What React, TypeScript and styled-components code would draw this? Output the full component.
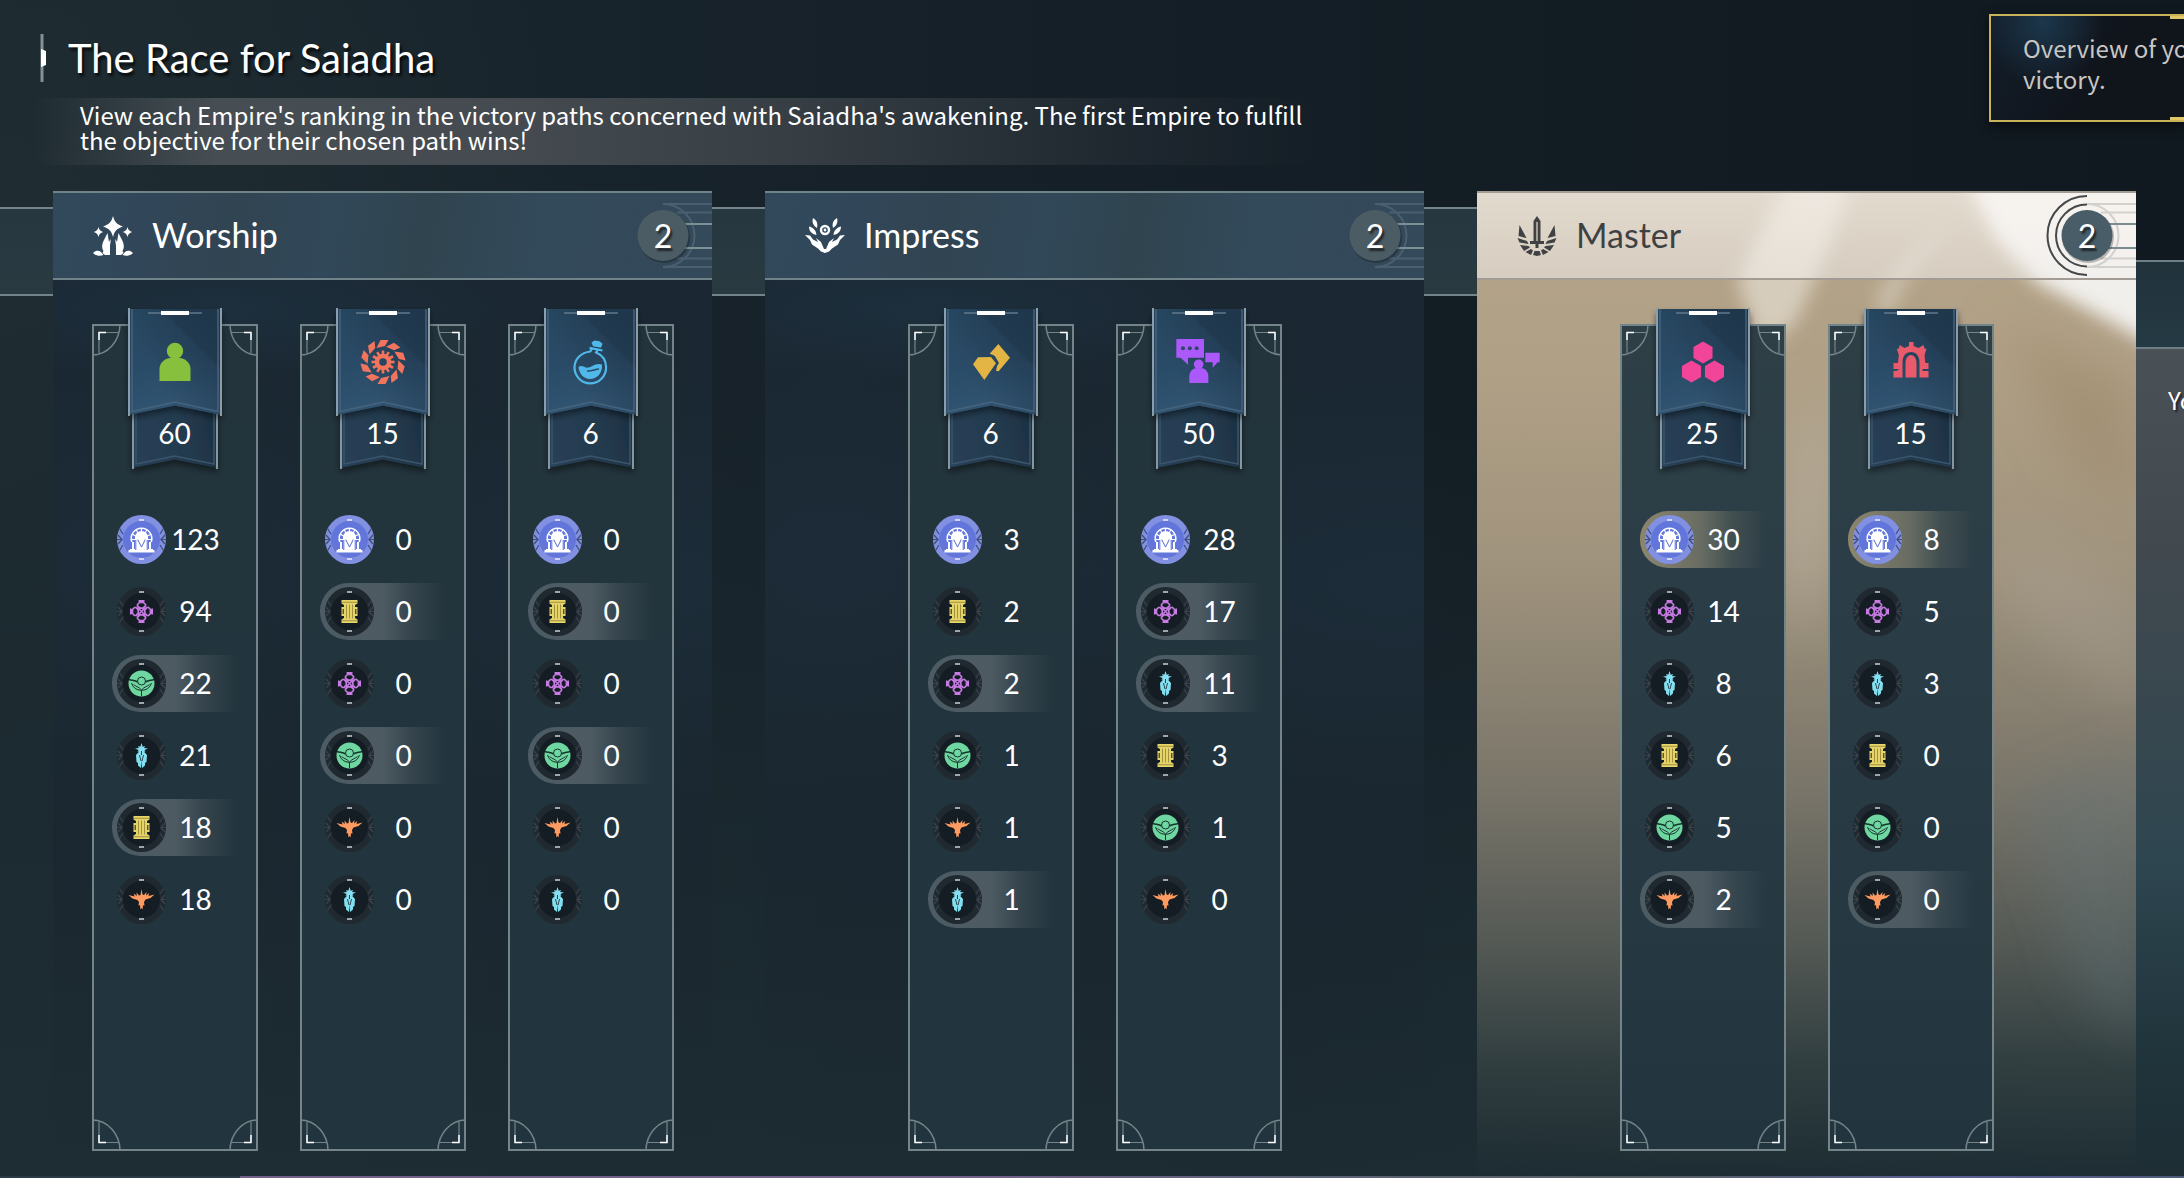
import React from "react";
import styled, { createGlobalStyle, css } from "styled-components";

const display = `Lato, "Open Sans", sans-serif`;
const body = `"Noto Sans CJK SC", "Noto Sans", sans-serif`;

const GlobalStyle = createGlobalStyle`
  *, *::before, *::after { box-sizing: border-box; }
  body { margin: 0; background: #16222a; }
  h1, h2, p, ol { margin: 0; padding: 0; }
`;

const Page = styled.main`
  position: relative;
  display: flex;
  flex-direction: column;
  min-height: 100vh;
  overflow: hidden;
  color: #fff;
  font-family: ${body};
  background:
    linear-gradient(180deg, rgba(30, 46, 52, 0) 35%, rgba(30, 46, 52, 0.85) 100%),
    radial-gradient(ellipse 900px 700px at 100% 90%, rgba(32, 56, 64, 0.7), transparent),
    radial-gradient(ellipse 600px 600px at 0% 20%, rgba(34, 47, 52, 0.6), transparent),
    linear-gradient(90deg, #1b292f 0%, #151f27 50%, #10191f 100%);
`;

const Intro = styled.header`
  display: flex;
  flex-direction: column;
  align-items: flex-start;
  gap: 16px;
  padding: 34px 40px 26px 34px;
`;

const TitleRow = styled.div`
  display: flex;
  align-items: center;
  gap: 20px;
  height: 48px;
  padding-left: 6px;
`;

const Title = styled.h1`
  font: 400 40px/48px ${display};
  text-shadow: 2px 3px 3px rgba(0, 0, 0, 0.8);
  white-space: nowrap;
`;

const Description = styled.p`
  width: 100%;
  max-width: 1290px;
  padding: 4px 8px 13px 46px;
  font-size: 24px;
  line-height: 25px;
  background: linear-gradient(
    90deg,
    rgba(84, 90, 95, 0) 0%,
    rgba(84, 90, 95, 0.75) 14%,
    rgba(84, 88, 93, 0.75) 36%,
    rgba(84, 88, 93, 0.5) 60%,
    rgba(84, 88, 93, 0.15) 85%,
    rgba(84, 88, 93, 0) 100%
  );
`;

const Notice = styled.aside`
  position: absolute;
  top: 14px;
  right: 0;
  width: 195px;
  height: 108px;
  padding: 16px 0 0 32px;
  border: 2px solid #c9b35a;
  border-right: 0;
  overflow: hidden;
  color: #c8c6c3;
  font-size: 24px;
  line-height: 31px;
  white-space: nowrap;
  background:
    radial-gradient(ellipse 60px 66px at 52px 6px, rgba(29, 58, 80, 0.9), transparent),
    linear-gradient(120deg, #131d29, #10141b 60%);
  box-shadow: 0 4px 10px rgba(0, 0, 0, 0.6);

  &::before,
  &::after {
    content: "";
    position: absolute;
    right: 0;
    width: 14px;
    height: 3px;
    background: #e0c765;
  }
  &::before { top: 0; }
  &::after { bottom: 0; }
`;

const Board = styled.div`
  flex: 1;
  display: flex;
  align-items: stretch;
`;

const Connector = styled.div`
  flex: 0 0 53px;
  display: flex;
  flex-direction: column;
  padding-top: 16px;

  &::before {
    content: "";
    height: 89px;
    border: solid #748589;
    border-width: 2px 0;
    background: linear-gradient(180deg, #263740, #293a41);
  }
`;

const SidePanel = styled.section`
  flex: 0 0 48px;
  display: flex;
  flex-direction: column;
  padding-top: 69px;
  overflow: hidden;

  &::before {
    content: "";
    height: 89px;
    border: solid #6d7f85;
    border-width: 2px 0;
    background: linear-gradient(180deg, #21323b, #253a44);
  }
`;

const SideText = styled.p`
  flex: 1;
  padding: 35px 0 0 32px;
  font-size: 24px;
  line-height: 31px;
  white-space: nowrap;
  text-shadow: 2px 2px 2px rgba(0, 0, 0, 0.6);
  background: linear-gradient(180deg, #4a5156 0%, #41494f 25%, #37474f 45%, #2e4650 62%, rgba(36, 58, 67, 0.5) 85%, transparent 100%);
`;

const Card = styled.section<{ $active?: boolean }>`
  position: relative;
  flex: 1;
  display: flex;
  flex-direction: column;
  background:
    radial-gradient(ellipse 300px 70px at 25% 12%, rgba(31, 54, 72, 0.5), transparent),
    radial-gradient(ellipse 460px 220px at 95% 40%, rgba(30, 50, 64, 0.5), transparent),
    radial-gradient(ellipse 300px 240px at 10% 38%, rgba(30, 48, 62, 0.5), transparent),
    linear-gradient(180deg, #1b2833 0%, #1a2731 40%, rgba(27, 39, 48, 0.8) 70%, rgba(28, 42, 48, 0) 100%);
  ${(p) =>
    p.$active &&
    css`
      background: linear-gradient(
        180deg,
        #b5a488 0%,
        #b0a086 18%,
        #a0937d 38%,
        #7b766a 60%,
        #555a55 76%,
        rgba(58, 70, 70, 0.75) 88%,
        rgba(33, 48, 53, 0) 100%
      );
    `}
`;

const Marble = styled.svg`
  position: absolute;
  inset: 0;
  width: 100%;
  height: 100%;
`;

const CardHeader = styled.header<{ $active?: boolean }>`
  position: relative;
  display: flex;
  align-items: center;
  gap: 19px;
  height: 89px;
  padding-left: 40px;
  border: solid ${(p) => (p.$active ? "#a39c94" : "#6f8389")};
  border-width: 2px 0;
  color: ${(p) => (p.$active ? "#3f4143" : "#fff")};
  background: ${(p) =>
    p.$active
      ? "linear-gradient(180deg, rgba(250,246,242,.66), rgba(243,240,238,.55))"
      : "linear-gradient(100deg, #32495b 0%, #31475a 10%, #314452 28%, #314859 42%, #30444f 56%, #334a5b 74%, #34495a 100%)"};
`;

const CardTitle = styled.h2`
  flex: 1;
  padding-bottom: 2px;
  font: 400 34px/40px ${display};
`;

const Badge = styled.div`
  position: relative;
  display: grid;
  place-items: center;
  width: 98px;
  height: 85px;
`;

const BadgeArt = styled.svg`
  position: absolute;
  top: 0;
  right: 0;
`;

const BadgeValue = styled.span`
  position: relative;
  color: #fff;
  font: 400 32px/40px ${display};
  text-shadow: 2px 3px 2px rgba(0, 0, 0, 0.6);
`;

const Columns = styled.div`
  position: relative;
  flex: 1;
  display: flex;
  justify-content: center;
  gap: 42px;
  padding: 44px 0 25px;
`;

const Column = styled.section<{ $active?: boolean }>`
  position: relative;
  width: 166px;
  border: 2px solid #74858a;
  display: flex;
  flex-direction: column;
  align-items: center;
  background: ${(p) =>
    p.$active ? "linear-gradient(180deg, #2e3f46, #293c46 50%, #22353e)" : "linear-gradient(180deg, #23343c, #22343d 50%, #22343e)"};
`;

const CornerMark = styled.svg<{ $x: "left" | "right"; $y: "top" | "bottom" }>`
  position: absolute;
  ${(p) => p.$x}: -2px;
  ${(p) => p.$y}: -2px;
  transform: scale(${(p) => (p.$x === "left" ? 1 : -1)}, ${(p) => (p.$y === "top" ? 1 : -1)});
`;

const Banner = styled.div`
  position: relative;
  flex: none;
  display: flex;
  flex-direction: column;
  align-items: center;
  gap: 27px;
  width: 94px;
  height: 161px;
  margin-top: -18px;
  padding-top: 30px;
`;

const BannerArt = styled.svg`
  position: absolute;
  top: 0;
  left: 0;
  overflow: visible;
`;

const MetricIcon = styled.svg`
  position: relative;
  width: 48px;
  height: 48px;
`;

const Goal = styled.span`
  position: relative;
  font: 400 28px/40px ${display};
`;

const Ranking = styled.ol`
  align-self: stretch;
  display: flex;
  flex-direction: column;
  gap: 15px;
  padding: 42px 0 0 18px;
  list-style: none;
`;

const highlights = {
  none: "transparent",
  grey: "linear-gradient(90deg, #4d5c64 0%, #4d5a62 50%, rgba(77,90,98,.45) 72%, rgba(77,90,98,0) 100%)",
  gold: "linear-gradient(90deg, #8d866f 0%, #666b62 50%, rgba(90,98,92,.5) 72%, rgba(77,90,98,0) 100%)",
};

const Row = styled.li<{ $mark: keyof typeof highlights }>`
  display: flex;
  align-items: center;
  width: 126px;
  height: 57px;
  padding-left: 5px;
  border-radius: 28px 0 0 28px;
  background: ${(p) => highlights[p.$mark]};
`;

const Score = styled.span`
  width: 60px;
  padding-bottom: 2px;
  text-align: center;
  font: 400 28px/40px ${display};
`;

const Footer = styled.footer`
  height: 2px;
  background: linear-gradient(90deg, #2b3b48 0 11%, #75608a 11% 45%, #5b6377 60%, #565f63 75%, #5a5f96 90%, #4d5a78 100%);
`;

/* ---------- empire emblems ---------- */

type Empire = "arch" | "cross" | "orb" | "beetle" | "pillar" | "horns";

const ArchGlyph = () => (
  <g>
    <path d="M14.8 27A10.3 10.3 0 1 1 34.2 27" fill="none" stroke="#fff" strokeWidth="1.500" />
    <path d="M24.500 13V17M19 14.500l2 3.500M30 14.500l-2 3.500M15 19l3.500 2M34 19l-3.500 2M14.500 24.500h3.500M34.500 24.500h-3.500" stroke="#fff" strokeWidth="1.200" />
    <path d="M18 36V22a6.500 6 0 0 1 13 0V36z" fill="#fff" />
    <path d="M15 27h2v7h2v2H13v-2h2zM34 27h-2v7h-2v2H36v-2h-2z" fill="#fff" />
    <path d="M11.500 35h26v2.500h-26z" fill="#fff" />
    <path d="M18.800 35V25M20.700 24.500l3.800 7.500L28.300 24.500M30.200 35V25" fill="none" stroke="#5368cf" strokeWidth="1" />
  </g>
);

const CrossGlyph = () => (
  <g fill="none" stroke="#c77be2" strokeWidth="1.7">
    {[0, 90, 180, 270].map((a) => (
      <g key={a} transform={`rotate(${a} 24.5 24.5)`}>
        <path d="M21.500 13.800h6M23 14v1.500M26 14v1.500M22.500 15.500h4l2 2v1.500l-2.500 2.200h-3L20.500 19v-1.500z" />
        <path d="M20.500 20.500l2.500 2.500" />
      </g>
    ))}
    <path d="M22 22l5 5M27 22l-5 5" strokeWidth="1.4" />
  </g>
);

const OrbGlyph = () => (
  <g>
    <circle cx="24.500" cy="24.500" r="13" fill="#6fd6a0" />
    <g fill="none" stroke="#15352f" strokeWidth="1">
      <circle cx="24.500" cy="22" r="4" />
      <path d="M12 20.500c3 1 6 1 8.500 2.500M37 20.500c-3 1-6 1-8.500 2.500" strokeWidth="1.500" />
      <path d="M14.500 24a10.500 10.500 0 0 0 20 0" />
      <path d="M16.500 25.500c2 2 5 2 8 5.500 3-3.500 6-3.500 8-5.500M24.500 31v6" />
    </g>
  </g>
);

const BeetleGlyph = () => (
  <g fill="#84dff0">
    <path d="M24.500 12l1.200 3.800 2.300-.8-.8 2 3.800.5-3.500 1.500 1 1.500-1.500.3L30 24l-.5 7-1.500 1v2.500l-3 2.500-.5-8-.5 8-3-2.500V32l-1.500-1-.5-7 3-3.200-1.500-.3 1-1.500-3.500-1.500 3.800-.5-.8-2 2.300.8z" />
    <path d="M22.500 24l1.500 6M26.500 24L25 30M24.500 20v4" stroke="#12232a" strokeWidth=".8" />
  </g>
);

const PillarGlyph = () => (
  <g>
    <path d="M16.500 13h16v3.500l-2.500 1.500v13l2.500 1.500V36h-16v-3.500l2.500-1.500V18l-2.500-1.500z" fill="#e6d469" />
    <path d="M16.500 20h3v9h-3zM29.500 20h3v9h-3z" fill="#e6d469" />
    <path d="M16.500 15.300h16M16.500 33.700h16M21.500 17.500v14M24.500 17.500v14M27.500 17.500v14" stroke="#8f8138" strokeWidth=".8" />
    <path d="M18.200 22v5M30.800 22v5" stroke="#131d23" strokeWidth="1" />
  </g>
);

const HornsGlyph = () => (
  <path
    fill="#ff9b61"
    d="M24.500 14l1 5.500 1.500.5 2.500-3-.3 3.500 3-2.500-.7 3 6-1.500-4 3.500-5 1.500L27 27l.5 3.500-1.500-.3-.5 4.300-1-1.500-1 1.500-.5-4.300-1.500.3.500-3.500-1.500-2-5-1.500-4-3.500 6 1.500-.7-3 3 2.500-.3-3.500 2.500 3 1.500-.5z"
  />
);

const glyphs: Record<Empire, () => React.JSX.Element> = {
  arch: ArchGlyph,
  cross: CrossGlyph,
  orb: OrbGlyph,
  beetle: BeetleGlyph,
  pillar: PillarGlyph,
  horns: HornsGlyph,
};

const Emblem = ({ empire }: { empire: Empire }) => {
  const own = empire === "arch";
  const Glyph = glyphs[empire];
  return (
    <svg width="49" height="49" viewBox="0 0 49 49" aria-hidden="true">
      <circle cx="24.500" cy="24.500" r="24.500" fill={own ? "#8190e0" : "#1f292f"} />
      <circle cx="24.500" cy="24.500" r="18.500" fill={own ? "#6175da" : "#131d23"} />
      <g fill="none" stroke={own ? "#3c4c7c" : "#3b464c"} strokeWidth="1.200">
        {[1, -1].map((s) => (
          <path key={s} transform={s === 1 ? undefined : "translate(49 0) scale(-1 1)"} d="M0 24.500h5M1 20l4 4.500-4 4.500M2.500 13.500L6 19M2.500 35.500L6 30" />
        ))}
      </g>
      <path d="M22 5h5M22 44h5" stroke={own ? "#cfd5f2" : "#9fa7aa"} strokeWidth="2" />
      <Glyph />
    </svg>
  );
};

/* ---------- metric icons ---------- */

type Metric = "people" | "industry" | "science" | "wealth" | "influence" | "territory" | "gate";

const hexagon = (cx: number, cy: number, r: number) =>
  [-90, -30, 30, 90, 150, 210]
    .map((a) => `${cx + r * Math.cos((a * Math.PI) / 180)},${cy + r * Math.sin((a * Math.PI) / 180)}`)
    .join(" ");

const spin = (count: number) => Array.from({ length: count }, (_, i) => (360 / count) * i);

const metricArt: Record<Metric, React.JSX.Element> = {
  people: (
    <g fill="#86c03c">
      <circle cx="24" cy="13" r="8.200" />
      <path d="M8.500 43V31c0-6 5-10.500 11-11h9c6 .5 11 5 11 11v12z" />
    </g>
  ),
  industry: (
    <g fill="#f3745c">
      {spin(10).map((a) => (
        <path key={a} transform={`rotate(${a} 24 24)`} d="M17.500 10L21.500 2h8L26 8z" />
      ))}
      {spin(12).map((a) => (
        <rect key={a} x="22.700" y="12.500" width="2.600" height="4.500" transform={`rotate(${a} 24 24)`} />
      ))}
      <circle cx="24" cy="24" r="6" fill="none" stroke="#f3745c" strokeWidth="4.500" />
    </g>
  ),
  science: (
    <g fill="none" stroke="#50b9ea" strokeWidth="2.200">
      <path d="M23.500 13.500C14 14.500 7.500 21 7.500 29.500a15.800 15.800 0 0 0 31.600 0c0-7-4-12.500-10-15l2-3.500" />
      <path d="M23 14l2-3.500M22.500 9.800l13 2.700" />
      <path d="M24.500 4.500l3-2 5 .8 3 2.500-1.500 4-8-1.500z" fill="#50b9ea" stroke="none" />
      <path d="M11.500 29c4-3 6 1.500 10 .5 4-.8 7-5 13.500-3 .8 9-5.500 14.500-12 14.500-6 0-11-5-11.500-12z" fill="#50b9ea" stroke="none" />
      <path d="M20 33c5 .5 8-2 12-2" stroke="#2a4a63" strokeWidth="1.400" />
    </g>
  ),
  wealth: (
    <g fill="#e2b545" transform="translate(-86.670 -38) scale(.33333)">
      <path d="M278 193l15-21 39-1 15 19-35 50z" />
      <path d="M328 161l26-29 35 41-34 41-8-2 3-14 6-9-12-20-5-4z" />
    </g>
  ),
  influence: (
    <g fill="#ac59fb" transform="translate(-294.670 -38) scale(.33333)">
      <path d="M888 117h83v56h-48v21l-22-21h-13z" />
      <path d="M975 158h43v29h-6l-15 16v-16h-22z" />
      <circle cx="955" cy="193" r="14.500" />
      <path d="M927 249v-20c0-12 8-22 18-24h22c9 2 17 12 17 24v20z" />
      <g fill="#2b4a66">
        <circle cx="908" cy="145" r="6" />
        <circle cx="928.500" cy="145" r="6" />
        <circle cx="949" cy="145" r="6" />
      </g>
    </g>
  ),
  territory: (
    <g fill="#f2459a">
      <polygon points={hexagon(24, 14.500, 11)} />
      <polygon points={hexagon(12.500, 33.500, 11)} />
      <polygon points={hexagon(35.500, 33.500, 11)} />
    </g>
  ),
  gate: (
    <g fill="#e95a6b">
      <path d="M18.500 39.500V25a5.500 8 0 0 1 11 0v14.500z" />
      <path d="M22 4h4.500v4l5 2 5-3 1 3.500 2 .5-2 6 .8 8h3.200v6h-6v2h6v6.500h-9V24c0-6-3.500-10-8.500-10s-8.500 4-8.500 10v15.500h-9V33h3l3-2h-6v-6H11l.800-8-2-6 2-.5 1-3.500 4.500 3 4.700-2z" />
    </g>
  ),
};

/* ---------- path icons ---------- */

const pathIcons = {
  worship: (
    <g fill="currentColor">
      <path d="M20 0c1.500 6 4 8.500 10 10.500-6 2-8.500 4.500-10 10.500-1.500-6-4-8.500-10-10.500C16 8.500 18.500 6 20 0z" />
      <path d="M5.500 11c.7 3 2 4.200 4.700 5-2.700.8-4 2-4.700 5-.7-3-2-4.200-4.700-5 2.700-.8 4-2 4.700-5zM34.500 11c.7 3 2 4.200 4.700 5-2.700.8-4 2-4.700 5-.7-3-2-4.200-4.700-5 2.700-.8 4-2 4.700-5z" />
      <path d="M14.500 17L10.500 25c-2 4.500-1.500 7.500 0 10l-1 2 2.500 2h5V30c0-2.500 1-4 .5-7L16 26z" />
      <path d="M25.500 17L29.500 25c2 4.500 1.500 7.500 0 10l1 2-2.500 2h-5V30c0-2.500-1-4-.5-7L24 26z" />
      <path d="M0 37c3-3 6-2.500 8-1l2.500 3C7 40.500 3 40 0 37zM40 37c-3-3-6-2.500-8-1l-2.500 3C33 40.500 37 40 40 37z" />
    </g>
  ),
  impress: (
    <g fill="currentColor">
      <circle cx="20" cy="14" r="4" fill="none" stroke="currentColor" strokeWidth="2.400" />
      <circle cx="20" cy="14" r="1.400" />
      <path d="M8 2c4 2.500 5 5.500 4 10-4-2.500-5.200-6-4-10zM32 2c-4 2.500-5 5.500-4 10 4-2.500 5.200-6 4-10zM4 10.500c5 1.500 7 4 7.500 8.500-5-1-7.500-4-7.500-8.500zM36 10.500c-5 1.500-7 4-7.500 8.500 5-1 7.500-4 7.500-8.500z" />
      <path d="M0 19l5 .5 3 4 5 2.500-2-4 5 4 3 7h2l3-7 5-4-2 4 5-2.500 3-4 5-.5-5 5-2 4.500-6 4-3 3-4 1.500-4-1.500-3-3-6-4L5 24z" />
    </g>
  ),
  master: (
    <g fill="currentColor">
      <path d="M20 0l3.500 5v20H27v3h-5.500v4h-3v-4H13v-3h3.500V5z" />
      <path d="M20 6v19" stroke="#e5dacd" strokeWidth="1.200" />
      <path d="M2.500 9l7 13-8-2zM37.500 9l-7 13 8-2zM.5 22l9.500 3 1.500 3-9-1.500zM39.500 22L30 25l-1.500 3 9-1.500zM3 29l8.500 1 1.500 1.500-6 3.500zM37 29l-8.500 1-1.500 1.500 6 3.500zM8.500 36l5.500-3 2 1.500-2 4.500zM31.500 36L26 33l-2 1.500 2 4.500zM16 39l1.500-4h5l1.500 4-4 1z" />
    </g>
  ),
};

/* ---------- decorative parts ---------- */

const Corner = ({ x, y }: { x: "left" | "right"; y: "top" | "bottom" }) => (
  <CornerMark $x={x} $y={y} width="32" height="34" viewBox="0 0 32 34" fill="none">
    <path d="M28 0A28 31 0 0 1 0 31" stroke="#74858a" strokeWidth="1.500" />
    <path d="M7 8.500V29M7 8.500H27" stroke="#74858a" strokeWidth="1.200" />
    <path d="M7 16V8.500H14" stroke="#fff" strokeWidth="1.500" />
  </CornerMark>
);

const BannerRibbon = () => (
  <BannerArt width="94" height="161" viewBox="0 0 94 161" fill="none">
    <defs>
      <linearGradient id="ribbonTop" x1="0" y1="0" x2=".3" y2="1">
        <stop offset="0" stopColor="#284862" />
        <stop offset=".5" stopColor="#2a4b66" />
        <stop offset="1" stopColor="#315472" />
      </linearGradient>
      <linearGradient id="ribbonFold" x1=".35" y1=".75" x2="1" y2=".35">
        <stop offset="0" stopColor="#1d3347" stopOpacity="0" />
        <stop offset="1" stopColor="#1d3347" stopOpacity=".7" />
      </linearGradient>
      <linearGradient id="ribbonLow" x1="0" y1=".5" x2="1" y2=".3">
        <stop offset="0" stopColor="#273f55" />
        <stop offset=".6" stopColor="#233a4e" />
        <stop offset="1" stopColor="#1d2f40" />
      </linearGradient>
      <filter id="ribbonShadow" x="-10%" y="-10%" width="120%" height="125%">
        <feDropShadow dx="0" dy="4" stdDeviation="3" floodColor="#000" floodOpacity=".45" />
      </filter>
    </defs>
    <g filter="url(#ribbonShadow)">
      <path d="M4 90H90V160L47 151.500 4 160z" fill="url(#ribbonLow)" />
    </g>
    <path d="M8 100V156L47 148 86 156V100" stroke="#3b556c" strokeWidth="1.500" />
    <path d="M5 100V161M89 100V161" stroke="#8797a2" strokeWidth="2" />
    <g filter="url(#ribbonShadow)">
      <path d="M0 1H94V107L47 97.500 0 107z" fill="url(#ribbonTop)" />
    </g>
    <path d="M32 1H94V62z" fill="#1f374c" fillOpacity=".5" />
    <path d="M0 1H94V107L47 97.500 0 107z" fill="url(#ribbonFold)" />
    <path d="M4 1V103.500L47 94 90 103.500V1" stroke="#45637c" strokeWidth="1.500" />
    <path d="M1 0V108M93 0V108" stroke="#8c9ca8" strokeWidth="2" />
    <path d="M20 5H74" stroke="#60788a" strokeWidth="1.500" />
    <path d="M33 5H61" stroke="#fff" strokeWidth="4" />
  </BannerArt>
);

const CountBadge = ({ value, active }: { value: number; active?: boolean }) => {
  const line = active ? "#d3d1ce" : "#4a606e";
  const strong = active ? "#7c8b8f" : "#7b8f95";
  return (
    <Badge>
      <BadgeArt width="100" height="85" viewBox="0 0 100 85" fill="none">
        <g stroke={line} strokeWidth="2">
          <path d="M51 11H100M65 19.500H100M65 65.500H100M51 74H100" />
          <path d="M51 11A31.500 31.500 0 0 1 51 74" />
        </g>
        <path d="M70 31H100M70 55H100" stroke={strong} strokeWidth="2" />
        {active && (
          <g stroke="#45484a" strokeWidth="2">
            <path d="M51 3A39.500 39.500 0 0 0 51 82" />
            <path d="M51 11.500A31 31 0 0 0 51 73.500" />
          </g>
        )}
        <circle cx="52" cy="44" r="26" fill="#000" fillOpacity=".25" />
        <circle cx="51" cy="42.500" r="25.500" fill={active ? "#485d67" : "#4c5c64"} />
      </BadgeArt>
      <BadgeValue>{value}</BadgeValue>
    </Badge>
  );
};

const MarbleTexture = () => (
  <Marble viewBox="0 0 659 987" preserveAspectRatio="none" aria-hidden="true">
    <defs>
      <filter id="soft" x="-20%" y="-20%" width="140%" height="140%">
        <feGaussianBlur stdDeviation="9" />
      </filter>
      <filter id="softer" x="-30%" y="-30%" width="160%" height="160%">
        <feGaussianBlur stdDeviation="24" />
      </filter>
      <clipPath id="cardArea">
        <rect width="659" height="987" />
      </clipPath>
    </defs>
    <g clipPath="url(#cardArea)">
      <path d="M490 -10H680V158L620 124 560 92 520 50z" fill="#f1efeb" filter="url(#soft)" />
      <path d="M310 -10H375L350 60 320 130 285 160 260 90z" fill="#e6ded1" fillOpacity=".7" filter="url(#soft)" />
      <path d="M470 30L430 90 405 140 400 100z" fill="#e6ded1" fillOpacity=".5" filter="url(#soft)" />
      <path d="M330 200C380 240 350 400 320 460L300 330z" fill="#c6bfb4" fillOpacity=".45" filter="url(#softer)" />
      <path d="M520 130L659 190V320L600 280z" fill="#977f61" fillOpacity=".4" filter="url(#softer)" />
      <path d="M500 360C580 340 620 380 670 420V520L560 450z" fill="#ada498" fillOpacity=".35" filter="url(#softer)" />
      <path d="M540 600L670 560V860L600 800z" fill="#63757a" fillOpacity=".35" filter="url(#softer)" />
    </g>
  </Marble>
);

/* ---------- data ---------- */

type Entry = [Empire, number, ("grey" | "gold")?];
type Path = {
  name: string;
  icon: keyof typeof pathIcons;
  count: number;
  active?: boolean;
  columns: { metric: Metric; goal: number; ranking: Entry[] }[];
};

const paths: Path[] = [
  {
    name: "Worship",
    icon: "worship",
    count: 2,
    columns: [
      { metric: "people", goal: 60, ranking: [["arch", 123], ["cross", 94], ["orb", 22, "grey"], ["beetle", 21], ["pillar", 18, "grey"], ["horns", 18]] },
      { metric: "industry", goal: 15, ranking: [["arch", 0], ["pillar", 0, "grey"], ["cross", 0], ["orb", 0, "grey"], ["horns", 0], ["beetle", 0]] },
      { metric: "science", goal: 6, ranking: [["arch", 0], ["pillar", 0, "grey"], ["cross", 0], ["orb", 0, "grey"], ["horns", 0], ["beetle", 0]] },
    ],
  },
  {
    name: "Impress",
    icon: "impress",
    count: 2,
    columns: [
      { metric: "wealth", goal: 6, ranking: [["arch", 3], ["pillar", 2], ["cross", 2, "grey"], ["orb", 1], ["horns", 1], ["beetle", 1, "grey"]] },
      { metric: "influence", goal: 50, ranking: [["arch", 28], ["cross", 17, "grey"], ["beetle", 11, "grey"], ["pillar", 3], ["orb", 1], ["horns", 0]] },
    ],
  },
  {
    name: "Master",
    icon: "master",
    count: 2,
    active: true,
    columns: [
      { metric: "territory", goal: 25, ranking: [["arch", 30, "gold"], ["cross", 14], ["beetle", 8], ["pillar", 6], ["orb", 5], ["horns", 2, "grey"]] },
      { metric: "gate", goal: 15, ranking: [["arch", 8, "gold"], ["cross", 5], ["beetle", 3], ["pillar", 0], ["orb", 0], ["horns", 0, "grey"]] },
    ],
  },
];

const PathCard = ({ path }: { path: Path }) => (
  <Card $active={path.active}>
    {path.active && <MarbleTexture />}
    <CardHeader $active={path.active}>
      <svg width="40" height="40" viewBox="0 0 40 40" aria-hidden="true">
        {pathIcons[path.icon]}
      </svg>
      <CardTitle>{path.name}</CardTitle>
      <CountBadge value={path.count} active={path.active} />
    </CardHeader>
    <Columns>
      {path.columns.map((column) => (
        <Column key={column.metric} $active={path.active}>
          <Corner x="left" y="top" />
          <Corner x="right" y="top" />
          <Corner x="left" y="bottom" />
          <Corner x="right" y="bottom" />
          <Banner>
            <BannerRibbon />
            <MetricIcon viewBox="0 0 48 48" aria-hidden="true">
              {metricArt[column.metric]}
            </MetricIcon>
            <Goal>{column.goal}</Goal>
          </Banner>
          <Ranking>
            {column.ranking.map(([empire, score, mark]) => (
              <Row key={empire} $mark={mark ?? "none"}>
                <Emblem empire={empire} />
                <Score>{score}</Score>
              </Row>
            ))}
          </Ranking>
        </Column>
      ))}
    </Columns>
  </Card>
);

export default function App() {
  return (
    <Page>
      <GlobalStyle />
      <Intro>
        <TitleRow>
          <svg width="8" height="48" viewBox="0 0 8 48" aria-hidden="true">
            <path d="M2 0V48" stroke="#84919a" strokeWidth="3" />
            <path d="M1 15L6 17V31L1 33z" fill="#fff" />
          </svg>
          <Title>The Race for Saiadha</Title>
        </TitleRow>
        <Description>
          View each Empire's ranking in the victory paths concerned with Saiadha's awakening. The first Empire to fulfill the objective for their chosen path wins!
        </Description>
      </Intro>
      <Board>
        {paths.map((path) => (
          <React.Fragment key={path.name}>
            <Connector />
            <PathCard path={path} />
          </React.Fragment>
        ))}
        <SidePanel>
          <SideText>Yo</SideText>
        </SidePanel>
      </Board>
      <Footer />
      <Notice>
        Overview of yo
        <br />
        victory.
      </Notice>
    </Page>
  );
}
